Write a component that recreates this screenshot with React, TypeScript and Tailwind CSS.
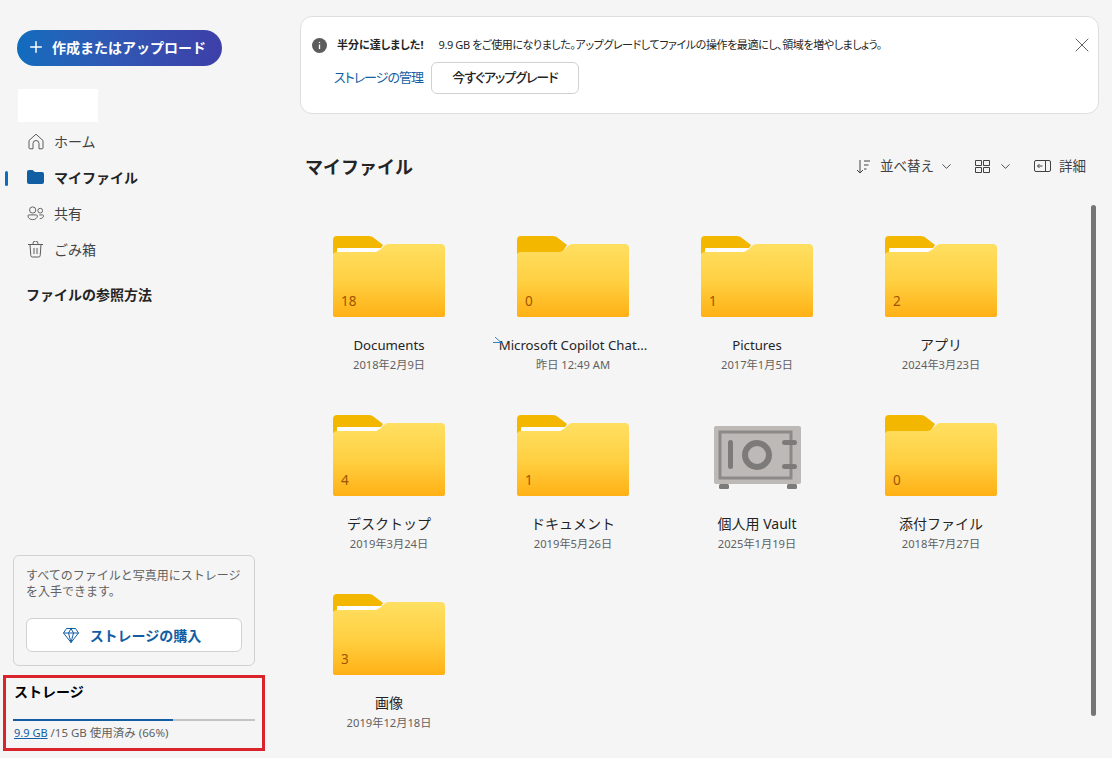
import { ChevronDown, Plus, X } from "lucide-react";

type Item = {
  name: string;
  date: string;
  count?: number;
  paper?: boolean;
  vault?: boolean;
  shortcut?: boolean;
  latin?: boolean;
};

const items: Item[] = [
  { name: "Documents", date: "2018年2月9日", count: 18, paper: true, latin: true },
  { name: "Microsoft Copilot Chat...", date: "昨日 12:49 AM", count: 0, shortcut: true, latin: true },
  { name: "Pictures", date: "2017年1月5日", count: 1, paper: true, latin: true },
  { name: "アプリ", date: "2024年3月23日", count: 2, paper: true },
  { name: "デスクトップ", date: "2019年3月24日", count: 4, paper: true },
  { name: "ドキュメント", date: "2019年5月26日", count: 1, paper: true },
  { name: "個人用 Vault", date: "2025年1月19日", vault: true },
  { name: "添付ファイル", date: "2018年7月27日", count: 0 },
  { name: "画像", date: "2019年12月18日", count: 3, paper: true },
];

function FolderArt({ id, paper }: { id: string; paper?: boolean }) {
  return (
    <svg width="112" height="81" viewBox="0 0 112 81" className="block">
      <defs>
        <linearGradient id={id} x1="0" y1="0" x2="0" y2="1">
          <stop offset="0" stopColor="#ffdf62" />
          <stop offset="0.5" stopColor="#ffd042" />
          <stop offset="1" stopColor="#ffb014" />
        </linearGradient>
      </defs>
      <path d="M0 20V4a4 4 0 0 1 4-4h32q3 0 5 2l9 7-6 9H0z" fill="#f3b700" />
      {paper && <path d="M4 16v-3q0-1 1-1h44l-5 4z" fill="#ffffff" />}
      <path d="M0 76v1a4 4 0 0 0 4 4h104a4 4 0 0 0 4-4v-1z" fill="#bd7300" />
      <path
        d="M0 20a4 4 0 0 1 4-4h38q3 0 5-2l4-4q2-2 4-2h53a4 4 0 0 1 4 4v66a4 4 0 0 1-4 4H4a4 4 0 0 1-4-4z"
        fill={`url(#${id})`}
      />
    </svg>
  );
}

function VaultArt() {
  return (
    <svg width="88" height="64" viewBox="0 0 88 64" className="block">
      <rect x="5" y="58" width="10" height="5" rx="1.5" fill="#7d7b79" />
      <rect x="73" y="58" width="10" height="5" rx="1.5" fill="#7d7b79" />
      <rect x="0" y="0" width="87" height="58" rx="2" fill="#bcb9b6" />
      <rect x="6" y="6" width="71" height="46" fill="none" stroke="#8c8a88" strokeWidth="3" />
      <rect x="14" y="14" width="5" height="29" rx="2.5" fill="#7d7b79" />
      <circle cx="43" cy="29" r="12" fill="none" stroke="#7d7b79" strokeWidth="6" />
      <rect x="68" y="14" width="15" height="5" rx="2.5" fill="#7d7b79" />
      <rect x="68" y="38" width="15" height="5" rx="2.5" fill="#7d7b79" />
    </svg>
  );
}

function FileCard({ item, index }: { item: Item; index: number }) {
  return (
    <div className="h-[179px] flex flex-col items-center">
      <div className="relative h-[81px] w-[112px] flex items-end justify-center">
        {item.vault ? (
          <div className="mb-[6px] ml-[1px]">
            <VaultArt />
          </div>
        ) : (
          <>
            <FolderArt id={`folder-${index}`} paper={item.paper} />
            <span className="absolute left-[8px] bottom-[8px] text-[13.5px] leading-4 text-[#a05400]">{item.count}</span>
          </>
        )}
      </div>
      <div
        className={
          item.latin
            ? "relative mt-[18px] h-[20px] text-[13.2px] leading-5 text-[#242424] whitespace-nowrap"
            : "relative mt-[18px] h-[20px] text-[14px] leading-5 text-[#242424] whitespace-nowrap"
        }
      >
        {item.shortcut && (
          <svg width="9" height="9" viewBox="0 0 9 9" className="absolute left-[-6px] top-[2px]">
            <path d="M0 5.500h8.500M2 0l6 5.500" fill="none" stroke="#2f86c4" strokeWidth="1" />
          </svg>
        )}
        {item.name}
      </div>
      <div className="h-[20px] text-[11.2px] leading-5 text-[#616161] whitespace-nowrap">{item.date}</div>
    </div>
  );
}

function NavRow({ label, active, icon }: { label: string; active?: boolean; icon: React.ReactNode }) {
  return (
    <div className="relative h-9 flex items-center pl-[27px] gap-[10px]">
      {active && <span className="absolute left-[5px] top-[12px] h-[15px] w-[3px] rounded-sm bg-[#0f6cbd]" />}
      <span className="w-[17px] flex justify-center text-[#5c5c5c]">{icon}</span>
      <span className={active ? "text-[14px] font-bold text-[#242424]" : "text-[14px] text-[#424242]"}>{label}</span>
    </div>
  );
}

const stroke = { fill: "none", stroke: "currentColor", strokeWidth: 1 };

export default function App() {
  return (
    <div className="flex h-[758px] w-[1112px] overflow-hidden bg-[#f5f5f5] [font-family:'Noto_Sans','Noto_Sans_CJK_JP',sans-serif]">
      {/* Sidebar */}
      <aside className="w-[280px] shrink-0 flex flex-col">
        <div className="pl-[17px] pt-[30px]">
          <button className="h-9 w-[205px] rounded-full bg-gradient-to-r from-[#0f6cbd] to-[#3d3fa8] text-white flex items-center pl-[10px] pb-[2px] gap-[7px] text-[14px] font-bold whitespace-nowrap">
            <Plus size={18} strokeWidth={2} />
            作成またはアップロード
          </button>
          <div className="mt-[23px] h-[33px] w-20 ml-px bg-white" />
        </div>
        <nav className="mt-[1px]">
          <NavRow
            label="ホーム"
            icon={
              <svg width="16" height="17" viewBox="0 0 16 17" {...stroke}>
                <path d="M1 7.500 8 1.200l7 6.300v7.300a1 1 0 0 1-1 1h-3V10.500a3 3 0 0 0-6 0v5.300H2a1 1 0 0 1-1-1z" />
              </svg>
            }
          />
          <NavRow
            label="マイファイル"
            active
            icon={
              <svg width="17" height="14" viewBox="0 0 17 14">
                <path
                  d="M0 2a2 2 0 0 1 2-2h3.500l2.500 2h7a2 2 0 0 1 2 2v8a2 2 0 0 1-2 2H2a2 2 0 0 1-2-2z"
                  fill="#115ea3"
                />
              </svg>
            }
          />
          <NavRow
            label="共有"
            icon={
              <svg width="18" height="15" viewBox="0 0 18 15" {...stroke}>
                <circle cx="6" cy="3.800" r="3.300" />
                <path d="M1 10q0-1 1-1h8q1 0 1 1c0 2.200-2 4-5 4s-5-1.800-5-4z" />
                <circle cx="14" cy="4.500" r="2.500" />
                <path d="M13 9h3.500q1 0 1 1c0 1.500-1.500 3-4 3" />
              </svg>
            }
          />
          <NavRow
            label="ごみ箱"
            icon={
              <svg width="15" height="17" viewBox="0 0 15 17" {...stroke}>
                <path d="M0 3.500h15M5 3.500V2.500a2 2 0 0 1 5 0v1M2 3.500l.8 11a1.500 1.500 0 0 0 1.500 1.500h6.400a1.500 1.500 0 0 0 1.500-1.500l.8-11M6 7v6M9 7v6" />
              </svg>
            }
          />
        </nav>
        <div className="mt-[18px] pl-[26px] text-[14px] leading-5 font-bold text-[#242424]">ファイルの参照方法</div>

        <div className="mt-auto ml-[13px] w-[242px] h-[111px] rounded-md border border-[#d1d1d1] px-[12px] pt-[12px]">
          <p className="text-[12px] leading-4 text-[#616161]">すべてのファイルと写真用にストレージを入手できます。</p>
          <button className="mt-[18px] h-[34px] w-full rounded-md border border-[#d1d1d1] bg-white flex items-center justify-center gap-[11px] pr-1 text-[14px] font-bold text-[#115ea3]">
            <svg width="16" height="15" viewBox="0 0 16 15" fill="none" stroke="#115ea3" strokeWidth="1">
              <path d="M3.500.5h9L15.500 5 8 14.500.5 5zM.5 5h15M5.500 5 8 14.500 10.500 5 8 .5z" />
            </svg>
            ストレージの購入
          </button>
        </div>

        <div className="mt-[9px] mb-[7px] ml-[3px] w-[262px] h-[76px] border-[3px] border-[#d9242b] pl-[7px]">
          <div className="mt-[4px] ml-[1px] text-[14px] leading-5 font-bold text-black">ストレージ</div>
          <div className="mt-[17px] h-[2px] w-[242px] bg-[#c4c4c4]">
            <div className="h-full w-[66%] bg-[#115ea3]" />
          </div>
          <div className="mt-[2px] ml-[1px] text-[11.5px] leading-5 text-[#616161] whitespace-nowrap">
            <a className="text-[11px] text-[#115ea3] underline">9.9 GB</a> /15 GB 使用済み (66%)
          </div>
        </div>
      </aside>

      {/* Main */}
      <main className="flex-1 min-w-0 pl-5 pr-[13px] pt-4">
        <section className="relative h-[98px] rounded-xl border border-[#dedede] bg-white pl-[11px] pt-[20px]">
          <div className="flex items-center h-4 text-[11px] [font-feature-settings:'palt']">
            <svg width="15" height="15" viewBox="0 0 15 15" className="mr-[10px]">
              <circle cx="7.500" cy="7.500" r="7.500" fill="#5c5c5c" />
              <path d="M7.500 4v1M7.500 6.500V11" stroke="#ffffff" strokeWidth="1.300" />
            </svg>
            <span className="font-bold text-[#242424] mr-[15px]">半分に達しました!</span>
            <span className="text-[#242424] tracking-[-0.4px]">9.9 GB をご使用になりました。アップグレードしてファイルの操作を最適にし、領域を増やしましょう。</span>
          </div>
          <div className="mt-[9px] ml-[22px] flex items-center gap-[8px] [font-feature-settings:'palt']">
            <span className="text-[13px] text-[#115ea3] tracking-[-1px]">ストレージの管理</span>
            <button className="h-8 w-[148px] rounded-md border border-[#d1d1d1] bg-white text-[13px] font-medium text-[#242424] tracking-[-1px]">今すぐアップグレード</button>
          </div>
          <X size={24} strokeWidth={1} className="absolute right-[4px] top-[16px] text-[#616161]" />
        </section>

        <div className="mt-[40px] h-[26px] flex items-center justify-between">
          <h1 className="ml-[5px] text-[18px] font-bold text-[#242424]">マイファイル</h1>
          <div className="flex items-center text-[13.5px] text-[#424242] mr-[13px] mb-[2px]">
            <svg width="15" height="15" viewBox="0 0 15 15" fill="none" stroke="currentColor" strokeWidth="1">
              <path d="M4 1v13M1 11l3 3 3-3M8 2h6M8 6h4.500M8 10h2.500" />
            </svg>
            <span className="ml-[9px]">並べ替え</span>
            <ChevronDown size={15} strokeWidth={1.500} className="ml-[5px]" />
            <svg width="15" height="15" viewBox="0 0 15 15" fill="none" stroke="currentColor" strokeWidth="1" className="ml-[21px]">
              <path d="M.5 1.500h6v5h-6zM8.500 1.500h6v5h-6zM.5 8.500h6v5h-6zM8.500 8.500h6v5h-6z" />
            </svg>
            <ChevronDown size={15} strokeWidth={1.500} className="ml-[8px]" />
            <svg width="17" height="14" viewBox="0 0 17 14" fill="none" stroke="currentColor" strokeWidth="1" className="ml-[21px]">
              <path d="M2 1.500h13a1.500 1.500 0 0 1 1.500 1.500v8a1.500 1.500 0 0 1-1.500 1.500H2A1.500 1.500 0 0 1 .5 11V3A1.500 1.500 0 0 1 2 1.500zM11.500 1.500v11M3.500 7h5M5.500 5l-2 2 2 2" />
            </svg>
            <span className="ml-[8px]">詳細</span>
          </div>
        </div>

        <div className="mt-[25px] flex items-start">
          <div className="ml-[-3px] grid grid-cols-[repeat(4,184px)] pt-[31px]">
            {items.map((item, i) => (
              <FileCard key={item.name} item={item} index={i} />
            ))}
          </div>
          <div className="ml-auto mr-[3px] w-[5px] h-[511px] rounded-full bg-[#757575]" />
        </div>
      </main>
    </div>
  );
}
